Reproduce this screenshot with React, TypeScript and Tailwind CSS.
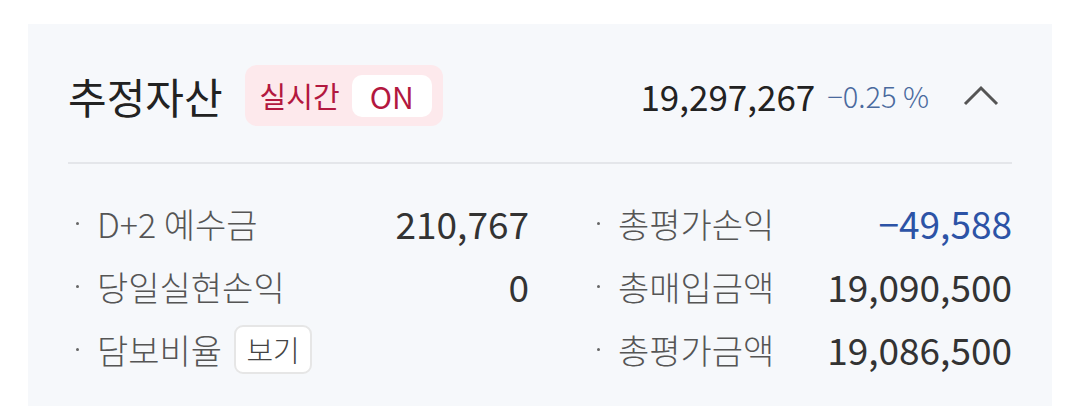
import React from "react";

const font = { fontFamily: '"Noto Sans CJK KR", "Noto Sans", sans-serif' };

function Dot() {
  return (
    <span className="w-[29px] shrink-0 flex items-center">
      <span className="ml-[8px] w-[3px] h-[3px] rounded-full bg-[#666]" />
    </span>
  );
}

function Row({ label, value, valueClass = "text-[#333]", extra }: { label: string; value?: string; valueClass?: string; extra?: React.ReactNode }) {
  return (
    <div className="h-[63px] flex items-center">
      <Dot />
      <span className="text-[34px] leading-none text-[#555] font-light">{label}</span>
      {extra}
      <span className={`ml-auto text-[37px] leading-none ${valueClass}`}>{value}</span>
    </div>
  );
}

export default function App() {
  return (
    <div className="w-[1080px] h-[415px] bg-white pt-[24px] px-[28px]" style={font}>
      <div className="bg-[#f6f8fb] h-[382px] px-[40px]">
        <div className="flex items-center pt-[41px] pb-[36px]">
          <span className="text-[42px] leading-none text-[#222]">추정자산</span>
          <div className="ml-[22px] h-[61px] w-[198px] rounded-[12px] bg-[#fde9ec] flex items-center pl-[15px]">
            <span className="text-[29px] leading-none text-[#b3183f]">실시간</span>
            <span className="ml-[12px] h-[42px] w-[80px] rounded-[10px] bg-white flex items-center justify-center text-[30px] leading-none text-[#b3183f]">ON</span>
          </div>
          <div className="ml-auto flex items-center">
            <span className="text-[35px] leading-none text-[#222]">19,297,267</span>
            <span className="ml-[12px] text-[29px] leading-none text-[#4a6a9e] font-light">−0.25 %</span>
            <svg className="ml-[34px] mr-[13px]" width="36" height="22" viewBox="0 0 36 22" fill="none">
              <path d="M2 19 L18 3 L34 19" stroke="#555" strokeWidth="3" />
            </svg>
          </div>
        </div>
        <div className="h-[2px] bg-[#e4e6ea]" />
        <div className="grid grid-cols-[461px_1fr] gap-x-[60px] pt-[28px]">
          <div>
            <Row label="D+2 예수금" value="210,767" />
            <Row label="당일실현손익" value="0" />
            <Row
              label="담보비율"
              extra={
                <span className="ml-[12px] h-[49px] w-[78px] rounded-[9px] border-2 border-[#e6e6e6] bg-white flex items-center justify-center text-[29px] leading-none text-[#444] font-light">
                  보기
                </span>
              }
            />
          </div>
          <div>
            <Row label="총평가손익" value="−49,588" valueClass="text-[#2c53a6]" />
            <Row label="총매입금액" value="19,090,500" />
            <Row label="총평가금액" value="19,086,500" />
          </div>
        </div>
      </div>
    </div>
  );
}
